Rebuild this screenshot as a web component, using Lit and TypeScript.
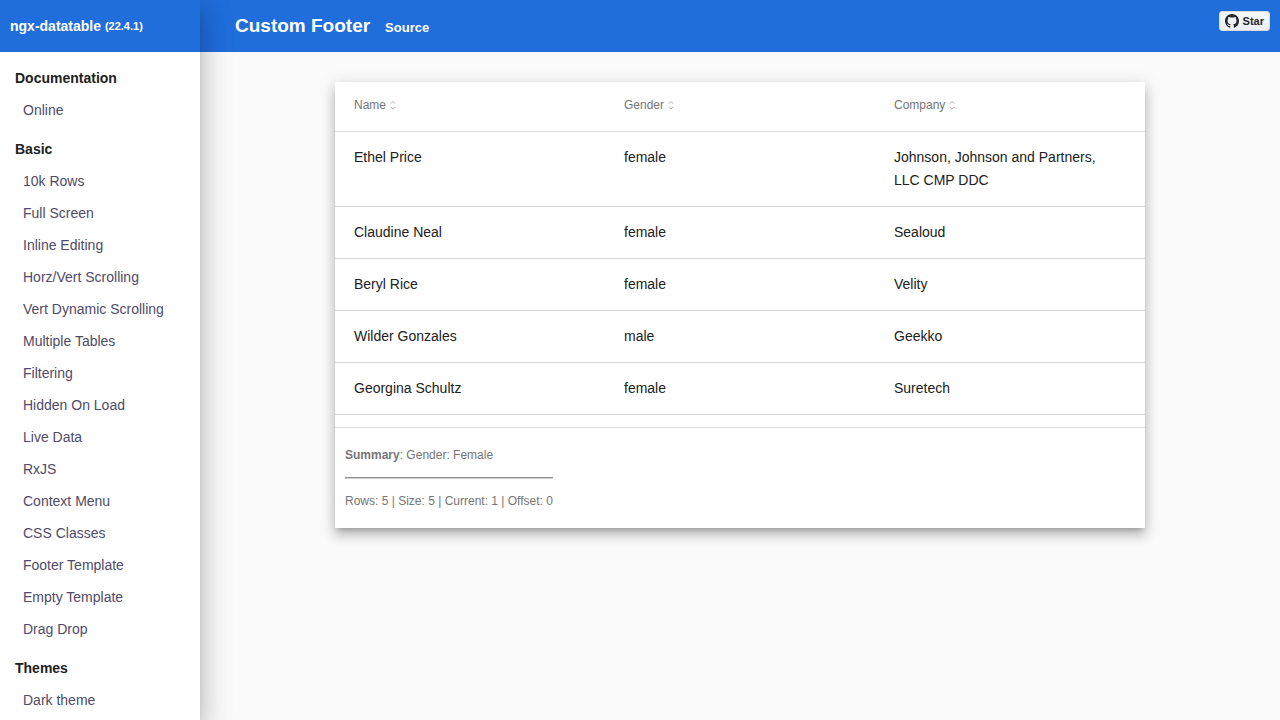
import { LitElement, html, css } from "lit";
import { customElement, property, state } from "lit/decorators.js";

interface Section {
  title: string;
  links: string[];
}

interface Person {
  name: string;
  gender: string;
  company: string;
}

const SECTIONS: Section[] = [
  { title: "Documentation", links: ["Online"] },
  {
    title: "Basic",
    links: [
      "10k Rows",
      "Full Screen",
      "Inline Editing",
      "Horz/Vert Scrolling",
      "Vert Dynamic Scrolling",
      "Multiple Tables",
      "Filtering",
      "Hidden On Load",
      "Live Data",
      "RxJS",
      "Context Menu",
      "CSS Classes",
      "Footer Template",
      "Empty Template",
      "Drag Drop",
    ],
  },
  { title: "Themes", links: ["Dark theme"] },
];

const ROWS: Person[] = [
  { name: "Ethel Price", gender: "female", company: "Johnson, Johnson and Partners, LLC CMP DDC" },
  { name: "Claudine Neal", gender: "female", company: "Sealoud" },
  { name: "Beryl Rice", gender: "female", company: "Velity" },
  { name: "Wilder Gonzales", gender: "male", company: "Geekko" },
  { name: "Georgina Schultz", gender: "female", company: "Suretech" },
];

const COLUMNS: { key: keyof Person; label: string }[] = [
  { key: "name", label: "Name" },
  { key: "gender", label: "Gender" },
  { key: "company", label: "Company" },
];

@customElement("side-nav")
export class SideNav extends LitElement {
  @property() version = "";

  static styles = css`
    :host {
      display: block;
      background: #fff;
      overflow: hidden auto;
      scrollbar-width: none;
    }
    .brand {
      display: flex;
      align-items: center;
      height: 52px;
      margin: 0;
      padding: 0 10px;
      background: #206ddc;
      color: #fff;
      font-size: 14px;
      line-height: 24px;
      font-weight: bold;
      white-space: pre;
    }
    .version {
      font-size: 11px;
    }
    .sections {
      display: flex;
      flex-direction: column;
      gap: 7px;
      padding: 10px 15px;
    }
    .title {
      margin: 0;
      font-size: 14px;
      line-height: 32px;
      color: #212121;
    }
    .links {
      margin: 0;
      padding: 0;
      list-style: none;
    }
    .link {
      display: block;
      padding: 0 8px;
      line-height: 32px;
      color: #4f4b68;
      text-decoration: none;
    }
    .link:hover {
      color: #206ddc;
    }
  `;

  render() {
    return html`
      <h1 class="brand"><span>ngx-datatable </span><span class="version">(${this.version})</span></h1>
      <nav class="sections">
        ${SECTIONS.map(
          (section) => html`
            <section>
              <h2 class="title">${section.title}</h2>
              <ul class="links">
                ${section.links.map(
                  (link) => html`<li><a class="link" href="#${link.toLowerCase().replace(/\W+/g, "-")}">${link}</a></li>`
                )}
              </ul>
            </section>
          `
        )}
      </nav>
    `;
  }
}

@customElement("data-table")
export class DataTable extends LitElement {
  @property({ attribute: false }) rows: Person[] = [];
  @state() private sortKey: keyof Person | null = null;
  @state() private ascending = true;

  static styles = css`
    :host {
      display: block;
      background: #fff;
      box-shadow:
        0 5px 5px -3px rgba(0, 0, 0, 0.2),
        0 8px 10px 1px rgba(0, 0, 0, 0.14),
        0 3px 14px 2px rgba(0, 0, 0, 0.12);
    }
    .table {
      width: 100%;
      table-layout: fixed;
      border-spacing: 0;
    }
    .head {
      padding: 12px 24px 14px 19px;
      border-bottom: 1px solid #dedede;
      text-align: left;
      vertical-align: top;
      font-weight: normal;
    }
    .sort {
      display: flex;
      align-items: center;
      gap: 4px;
      margin: 0;
      padding: 0;
      border: 0;
      background: none;
      color: #757575;
      font: inherit;
      font-size: 12px;
      line-height: 23px;
      cursor: pointer;
    }
    .arrows {
      display: block;
      width: 6px;
      height: 11px;
      fill: none;
      stroke: #a8a8a8;
      stroke-width: 1;
    }
    .cell {
      padding: 14px 24px 14px 19px;
      border-bottom: 1px solid #d5d5d5;
      vertical-align: top;
      color: #212121;
      font-size: 14px;
      line-height: 23px;
    }
    .footer {
      display: flex;
      margin-top: 12px;
      padding: 16px 10px 15px;
      border-top: 1px solid #dedede;
      color: #757575;
      font-size: 12px;
      line-height: 23px;
    }
    .summary {
      margin: 0;
    }
    .rule {
      margin: 10px 0 11px;
      border: 0;
      border-top: 1px solid #909090;
      border-bottom: 1px solid #d0d0d0;
    }
  `;

  private sortBy(key: keyof Person) {
    this.ascending = this.sortKey === key ? !this.ascending : true;
    this.sortKey = key;
  }

  private get sorted(): Person[] {
    const key = this.sortKey;
    if (!key) return this.rows;
    const direction = this.ascending ? 1 : -1;
    return [...this.rows].sort((a, b) => a[key].localeCompare(b[key]) * direction);
  }

  render() {
    return html`
      <table class="table">
        <thead>
          <tr>
            ${COLUMNS.map(
              (column) => html`
                <th class="head" scope="col">
                  <button class="sort" type="button" @click=${() => this.sortBy(column.key)}>
                    ${column.label}
                    <svg class="arrows" viewBox="0 0 6 11" aria-hidden="true">
                      <path d="M0.8 3.6 3 1.4 5.2 3.6M0.8 7 3 9.2 5.2 7" />
                    </svg>
                  </button>
                </th>
              `
            )}
          </tr>
        </thead>
        <tbody>
          ${this.sorted.map(
            (row) => html`<tr>${COLUMNS.map((column) => html`<td class="cell">${row[column.key]}</td>`)}</tr>`
          )}
        </tbody>
      </table>
      <footer class="footer">
        <div>
          <p class="summary"><strong>Summary</strong>: Gender: Female</p>
          <hr class="rule" />
          <p class="summary">Rows: ${this.rows.length} | Size: 5 | Current: 1 | Offset: 0</p>
        </div>
      </footer>
    `;
  }
}

@customElement("app-root")
export class AppRoot extends LitElement {
  static styles = css`
    :host {
      display: grid;
      grid-template-columns: 200px minmax(0, 1fr);
      height: 100vh;
      background: #fafafa;
      color: #212121;
      font-family: "Liberation Sans", Arial, sans-serif;
      font-size: 14px;
    }
    .side {
      z-index: 1;
      box-shadow:
        0 8px 10px -5px rgba(0, 0, 0, 0.2),
        0 16px 24px 2px rgba(0, 0, 0, 0.14),
        0 6px 30px 5px rgba(0, 0, 0, 0.12);
    }
    .content {
      overflow: auto;
    }
    .bar {
      display: flex;
      align-items: center;
      height: 52px;
      padding: 0 10px 0 35px;
      background: #206ddc;
      color: #fff;
    }
    .heading {
      margin: 0;
      font-size: 19px;
      line-height: 24px;
    }
    .source {
      margin: 3px 0 0 15px;
      color: #fff;
      font-size: 13px;
      line-height: 20px;
      font-weight: bold;
      text-decoration: none;
    }
    .star {
      display: flex;
      align-items: center;
      align-self: flex-start;
      gap: 4px;
      box-sizing: border-box;
      height: 20px;
      margin: 11px 0 0 auto;
      padding: 0 5px;
      border: 1px solid #d5dae0;
      border-radius: 3px;
      background: linear-gradient(#f6f8fa, #ebf0f4);
      color: #25292e;
      font-size: 11px;
      line-height: 14px;
      font-weight: bold;
      text-decoration: none;
    }
    .mark {
      width: 14px;
      height: 14px;
      fill: currentColor;
    }
    .table {
      width: 75%;
      margin: 30px auto;
    }
  `;

  render() {
    return html`
      <side-nav class="side" version="22.4.1"></side-nav>
      <main class="content">
        <header class="bar">
          <h2 class="heading">Custom Footer</h2>
          <a class="source" href="#source">Source</a>
          <a class="star" href="#star">
            <svg class="mark" viewBox="0 0 16 16" aria-hidden="true">
              <path
                d="M8 0C3.58 0 0 3.58 0 8c0 3.54 2.29 6.53 5.47 7.59.4.07.55-.17.55-.38 0-.19-.01-.82-.01-1.49-2.01.37-2.53-.49-2.69-.94-.09-.23-.48-.94-.82-1.13-.28-.15-.68-.52-.01-.53.63-.01 1.08.58 1.23.82.72 1.21 1.87.87 2.33.66.07-.52.28-.87.51-1.07-1.78-.2-3.64-.89-3.64-3.95 0-.87.31-1.59.82-2.15-.08-.2-.36-1.02.08-2.12 0 0 .67-.21 2.2.82.64-.18 1.32-.27 2-.27s1.36.09 2 .27c1.53-1.04 2.2-.82 2.2-.82.44 1.1.16 1.92.08 2.12.51.56.82 1.27.82 2.15 0 3.07-1.87 3.75-3.65 3.95.29.25.54.73.54 1.48 0 1.07-.01 1.93-.01 2.2 0 .21.15.46.55.38A8.01 8.01 0 0 0 16 8c0-4.42-3.58-8-8-8z"
              />
            </svg>
            <span>Star</span>
          </a>
        </header>
        <data-table class="table" .rows=${ROWS}></data-table>
      </main>
    `;
  }
}
